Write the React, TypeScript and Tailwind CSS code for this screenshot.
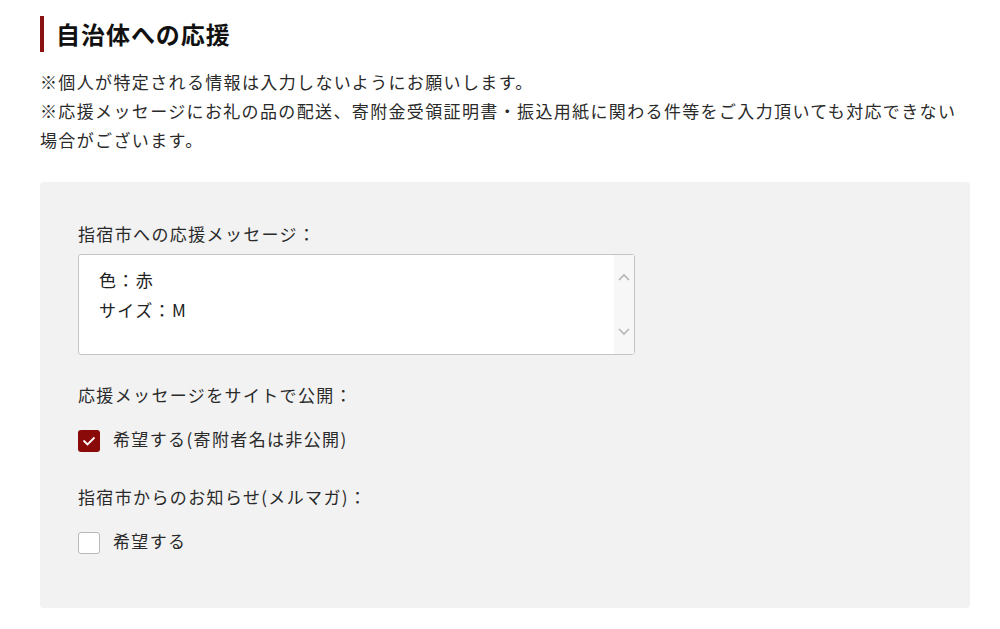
import React from "react";

const font = { fontFamily: '"Noto Sans CJK JP", "Noto Sans", sans-serif' };

export default function App() {
  return (
    <div className="w-[1000px] h-[629px] bg-white text-[#2a2a2a] overflow-hidden" style={font}>
      <div className="px-[40px] pt-[16px]">
        <div className="h-[36px] border-l-[4px] border-[#8b1212] pl-[12px] flex items-center">
          <h2 className="text-[24px] font-bold text-[#111] tracking-[0.04em] leading-none">自治体への応援</h2>
        </div>
        <div className="mt-[15px] text-[17px] leading-[29px] tracking-[0.08em] whitespace-nowrap">
          <p>※個人が特定される情報は入力しないようにお願いします。</p>
          <p>
            ※応援メッセージにお礼の品の配送、寄附金受領証明書・振込用紙に関わる件等をご入力頂いても対応できない
            <br />
            場合がございます。
          </p>
        </div>
        <div className="mt-[28px] w-[930px] h-[426px] bg-[#f2f2f2] rounded-[4px] pl-[38px] pt-[37px] text-[17px] leading-[29px] tracking-[0.08em]">
          <p>指宿市への応援メッセージ：</p>
          <div className="mt-[6px] w-[557px] h-[101px] bg-white border border-[#c4c4c4] rounded-[3px] flex">
            <div className="flex-1 pl-[20px] pt-[10px] leading-[30px] text-[#222]">
              <p>色：赤</p>
              <p>サイズ：M</p>
            </div>
            <div className="w-[20px] bg-[#f7f7f7] flex flex-col items-center justify-between py-[18px]">
              <svg width="12" height="8" viewBox="0 0 12 8">
                <path d="M1 7 L6 2 L11 7" fill="none" stroke="#b5b5b5" strokeWidth="1.6" />
              </svg>
              <svg width="12" height="8" viewBox="0 0 12 8">
                <path d="M1 1 L6 6 L11 1" fill="none" stroke="#b5b5b5" strokeWidth="1.6" />
              </svg>
            </div>
          </div>
          <p className="mt-[25px]">応援メッセージをサイトで公開：</p>
          <div className="mt-[21px] flex items-center gap-[13px] h-[22px]">
            <span className="w-[22px] h-[22px] rounded-[3px] bg-[#8a0a0a] flex items-center justify-center">
              <svg width="14" height="10" viewBox="0 0 14 10">
                <path d="M1.5 4.5 L5.5 8.5 L12.5 1.5" fill="none" stroke="#fff" strokeWidth="1.8" />
              </svg>
            </span>
            <span className="-mt-[6px]">希望する(寄附者名は非公開)</span>
          </div>
          <p className="mt-[30px]">指宿市からのお知らせ(メルマガ)：</p>
          <div className="mt-[21px] flex items-center gap-[13px] h-[22px]">
            <span className="w-[22px] h-[22px] rounded-[3px] bg-white border border-[#b8b8b8]" />
            <span className="-mt-[6px]">希望する</span>
          </div>
        </div>
      </div>
    </div>
  );
}
